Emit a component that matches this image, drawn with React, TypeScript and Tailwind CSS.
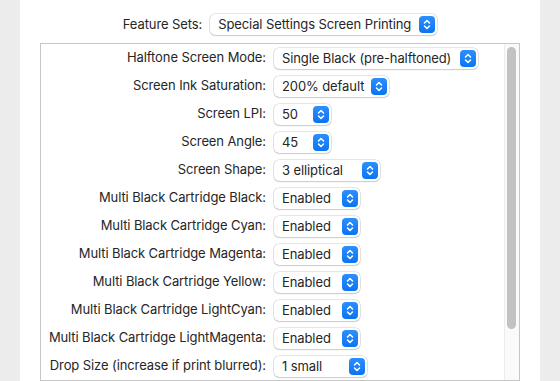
const rows: { label: string; value: string; width: number }[] = [
  { label: "Halftone Screen Mode:", value: "Single Black (pre-halftoned)", width: 204 },
  { label: "Screen Ink Saturation:", value: "200% default", width: 115 },
  { label: "Screen LPI:", value: "50", width: 57 },
  { label: "Screen Angle:", value: "45", width: 57 },
  { label: "Screen Shape:", value: "3 elliptical", width: 106 },
  { label: "Multi Black Cartridge Black:", value: "Enabled", width: 86 },
  { label: "Multi Black Cartridge Cyan:", value: "Enabled", width: 86 },
  { label: "Multi Black Cartridge Magenta:", value: "Enabled", width: 86 },
  { label: "Multi Black Cartridge Yellow:", value: "Enabled", width: 86 },
  { label: "Multi Black Cartridge LightCyan:", value: "Enabled", width: 86 },
  { label: "Multi Black Cartridge LightMagenta:", value: "Enabled", width: 86 },
  { label: "Drop Size (increase if print blurred):", value: "1 small", width: 93 },
];

const Stepper = () => (
  <span className="flex h-[17px] w-[16px] items-center justify-center rounded-[4px] bg-gradient-to-b from-[#2b8fff] to-[#0a74f0]">
    <svg width="16" height="17" viewBox="0 0 16 17" fill="none">
      <path d="M5.5 7 L8 4.5 L10.5 7" stroke="white" strokeWidth="1.5" strokeLinecap="round" strokeLinejoin="round" />
      <path d="M5.5 10 L8 12.5 L10.5 10" stroke="white" strokeWidth="1.5" strokeLinecap="round" strokeLinejoin="round" />
    </svg>
  </span>
);

const Popup = ({ value, width }: { value: string; width: number }) => (
  <div
    className="flex h-[21px] shrink-0 items-center justify-between rounded-[5px] bg-white pl-[8px] pr-[2px] shadow-[0_0_0_0.5px_rgba(0,0,0,0.2),0_1px_1.5px_rgba(0,0,0,0.12)]"
    style={{ width }}
  >
    <span className="text-[13px] leading-none tracking-[-0.1px] text-[#262626]">{value}</span>
    <Stepper />
  </div>
);

export default function App() {
  return (
    <div className="flex h-[381px] w-[560px] bg-[#ececec] font-['Inter',sans-serif]">
      <div className="mx-[20px] flex h-full w-[520px] flex-col overflow-hidden bg-white">
        {/* Feature Sets */}
        <div className="flex h-[43px] items-start justify-center gap-[8px] pt-[14px]">
          <span className="flex h-[21px] items-center text-[13px] tracking-[-0.1px] text-[#262626]">Feature Sets:</span>
          <Popup value="Special Settings Screen Printing" width={227} />
        </div>

        {/* Settings box */}
        <div className="relative ml-[20px] h-[338px] w-[480px] border border-[#c6c6c6]">
          <div className="flex flex-col">
            {rows.map((row) => (
              <div key={row.label} className="flex h-[28px] items-center gap-[8px]">
                <span className="w-[225px] shrink-0 whitespace-nowrap text-right text-[13px] tracking-[-0.1px] text-[#262626]">
                  {row.label}
                </span>
                <Popup value={row.value} width={row.width} />
              </div>
            ))}
          </div>

          {/* scrollbar */}
          <div className="absolute right-0 top-0 h-full w-[15px] border-l border-[#ececec] bg-[#fafafa]">
            <div className="ml-[2px] mt-[3px] h-[282px] w-[9px] rounded-full bg-[#c2c2c2]" />
          </div>
        </div>
      </div>
    </div>
  );
}
